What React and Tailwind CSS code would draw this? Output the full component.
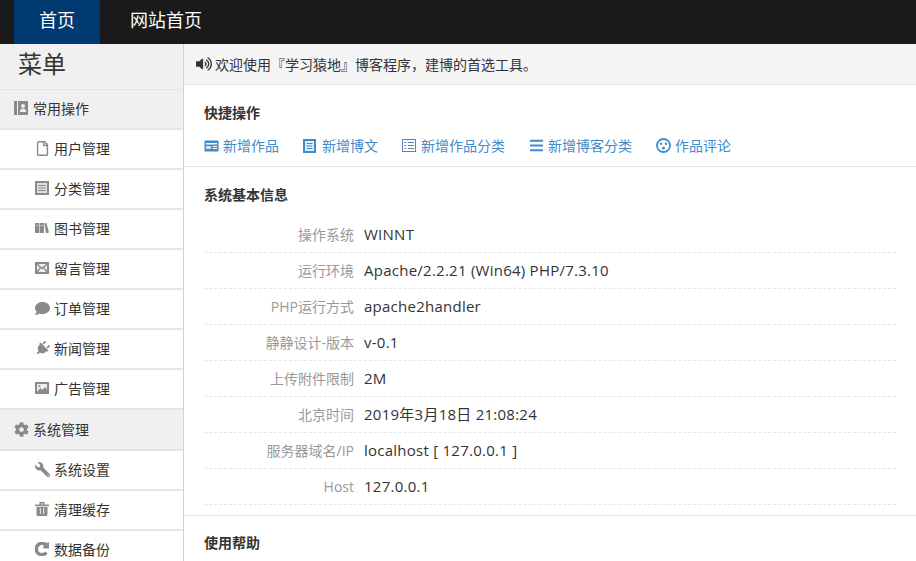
import React from "react";
import { FaVolumeUp, FaRegFile, FaComment, FaPlug, FaCog, FaWrench, FaRedoAlt, FaBars } from "react-icons/fa";

const Svg = ({ children, w = 14, h = 14, className = "" }) => (
  <svg width={w} height={h} viewBox={`0 0 ${w} ${h}`} className={className}>{children}</svg>
);

const AddressIcon = () => (
  <Svg>
    <path fill="currentColor" d="M0 0h3v14H0zM4 0h10v14H4z" />
    <circle cx="9" cy="5" r="2" fill="#f0f0f0" />
    <path fill="#f0f0f0" d="M6 11c0-3 1-3.5 3-3.5s3 .5 3 3.5z" />
  </Svg>
);
const ListIcon = () => (
  <Svg>
    <rect x="1" y="1" width="12" height="12" fill="#ddd" stroke="currentColor" strokeWidth="2" />
    <path stroke="currentColor" strokeWidth="1.2" d="M3.5 4.5h7M3.5 7h7M3.5 9.5h7" />
  </Svg>
);
const BooksIcon = () => (
  <Svg h={12}>
    <path fill="currentColor" d="M0 1h4.2v10H0zM4.8 1H9v10H4.8zM9.4 1.5l2-.7L14 10.5l-3 .7z" />
    <path fill="#ddd" d="M.8 3h2.6v.8H.8zM5.6 3h2.6v.8H5.6z" />
  </Svg>
);
const MailIcon = () => (
  <Svg h={12}>
    <rect x="1" y="1" width="12" height="10" fill="#eee" stroke="currentColor" strokeWidth="2" />
    <path stroke="currentColor" strokeWidth="1.4" fill="none" d="M2 2l5 4.5L12 2M2 10l3.6-4.6M12 10L8.4 5.4" />
  </Svg>
);
const PictureIcon = () => (
  <Svg h={12}>
    <rect x="1" y="1" width="12" height="10" fill="#eee" stroke="currentColor" strokeWidth="2" />
    <path fill="currentColor" d="M2 10l3.5-4 2 2 2.5-3 2 2.5V10z" />
    <circle cx="4.5" cy="4" r="1.1" fill="currentColor" />
  </Svg>
);
const TrashIcon = () => (
  <Svg>
    <path fill="currentColor" d="M0 2.5h14V4.2H0zM4.5 0h5v3H8V1.4H6V3H4.5zM1.5 5h11v7.5c0 .8-.7 1.5-1.5 1.5H3c-.8 0-1.5-.7-1.5-1.5z" />
    <path fill="#ddd" d="M4.8 6h1.2v6H4.8zM8 6h1.2v6H8z" />
  </Svg>
);
const NewsIcon = () => (
  <Svg w={15} h={12}>
    <rect x="0.5" y="0.5" width="14" height="11" fill="currentColor" />
    <path fill="#fff" d="M2 3h11v1.4H2zM8.5 6H13v1H8.5zM8.5 8H13v1H8.5z" />
    <path fill="#cfe2f3" d="M2 6h5v3H2z" />
  </Svg>
);
const DocIcon = () => (
  <Svg w={13} h={14}>
    <rect x="1" y="1" width="11" height="12" fill="#e4eef7" stroke="currentColor" strokeWidth="2" />
    <path stroke="currentColor" strokeWidth="1.2" d="M3.5 4.5h6M3.5 7h6M3.5 9.5h6" />
  </Svg>
);
const FormIcon = () => (
  <Svg w={14} h={13}>
    <rect x="0.5" y="0.5" width="13" height="12" fill="#fff" stroke="currentColor" strokeWidth="1" />
    <path stroke="currentColor" strokeWidth="1" d="M6 3.5h6M6 6.5h6M6 9.5h6" />
    <path stroke="#c77" strokeWidth="1" d="M2 3.5h2.5M2 6.5h2.5M2 9.5h2.5" />
  </Svg>
);
const FaceIcon = () => (
  <Svg w={15} h={15}>
    <circle cx="7.5" cy="7.5" r="6.5" fill="none" stroke="currentColor" strokeWidth="1.8" />
    <circle cx="5" cy="5.8" r="1.2" fill="currentColor" />
    <circle cx="10" cy="5.8" r="1.2" fill="currentColor" />
    <circle cx="7.5" cy="10" r="1.6" fill="currentColor" />
  </Svg>
);

const font = { fontFamily: '"Open Sans","Noto Sans CJK SC",sans-serif' };

function Item({ icon, label }) {
  return (
    <div className="h-10 border-b-2 border-[#e5e5e5] bg-white flex items-center pl-[35px] pb-[2px] text-[14px] text-[#333] shrink-0">
      <span className="w-[19px] flex items-center text-[#8a8a8a]">{icon}</span>
      <span>{label}</span>
    </div>
  );
}

function Group({ icon, label, h = "h-10 pb-[2px]" }) {
  return (
    <div className={`${h} border-b-2 border-[#e5e5e5] bg-[#f0f0f0] flex items-center pl-[14px] text-[14px] text-[#333] shrink-0`}>
      <span className="w-[19px] flex items-center text-[#8a8a8a]">{icon}</span>
      <span>{label}</span>
    </div>
  );
}

function Quick({ icon, label }) {
  return (
    <a className="flex items-center text-[14px] text-[#428bca]">
      <span className="w-[19px] flex items-center">{icon}</span>
      <span>{label}</span>
    </a>
  );
}

const rows = [
  ["操作系统", "WINNT"],
  ["运行环境", "Apache/2.2.21 (Win64) PHP/7.3.10"],
  ["PHP运行方式", "apache2handler"],
  ["静静设计-版本", "v-0.1"],
  ["上传附件限制", "2M"],
  ["北京时间", "2019年3月18日 21:08:24"],
  ["服务器域名/IP", "localhost [ 127.0.0.1 ]"],
  ["Host", "127.0.0.1"],
];

export default function App() {
  return (
    <div className="h-[561px] w-[916px] overflow-hidden bg-white flex flex-col" style={font}>
      <header className="h-11 bg-[#1a1a1a] flex items-stretch pl-[14px] shrink-0 text-[18px] text-white">
        <div className="w-[86px] bg-[#003a70] flex items-center justify-center pb-1">首页</div>
        <div className="flex items-center pl-[30px] pb-1">网站首页</div>
      </header>
      <div className="flex flex-1 min-h-0">
        <aside className="w-[184px] border-r border-[#d0d0d0] flex flex-col shrink-0 overflow-hidden">
          <div className="h-[46px] bg-[#f0f0f0] border-b border-[#e5e5e5] pl-[18px] text-[24px] leading-[40px] text-[#333] shrink-0">菜单</div>
          <Group icon={<AddressIcon />} label="常用操作" />
          <Item icon={<FaRegFile className="text-[15px]" />} label="用户管理" />
          <Item icon={<ListIcon />} label="分类管理" />
          <Item icon={<BooksIcon />} label="图书管理" />
          <Item icon={<MailIcon />} label="留言管理" />
          <Item icon={<FaComment className="text-[15px]" />} label="订单管理" />
          <Item icon={<FaPlug className="text-[15px] rotate-45" />} label="新闻管理" />
          <Item icon={<PictureIcon />} label="广告管理" />
          <Group icon={<FaCog className="text-[15px]" />} label="系统管理" h="h-[41px]" />
          <Item icon={<FaWrench className="text-[15px] -scale-x-100" />} label="系统设置" />
          <Item icon={<TrashIcon />} label="清理缓存" />
          <Item icon={<FaRedoAlt className="text-[14px]" stroke="currentColor" strokeWidth="50" />} label="数据备份" />
        </aside>
        <main className="flex-1 min-w-0 overflow-hidden">
          <div className="h-[41px] bg-[#f5f5f5] border-b border-[#e5e5e5] flex items-center pl-[12px] text-[14px] text-[#333]">
            <FaVolumeUp className="text-[16px] text-[#333] mr-[3px]" />
            <span>欢迎使用『学习猿地』博客程序，建博的首选工具。</span>
          </div>
          <section className="h-[82px] border-b border-[#e5e5e5] px-5 pt-[18px]">
            <h2 className="text-[14px] font-bold text-[#333] leading-5">快捷操作</h2>
            <div className="flex gap-6 mt-[12px]">
              <Quick icon={<NewsIcon />} label="新增作品" />
              <Quick icon={<DocIcon />} label="新增博文" />
              <Quick icon={<FormIcon />} label="新增作品分类" />
              <Quick icon={<FaBars className="text-[15px] w-[15px]" />} label="新增博客分类" />
              <Quick icon={<FaceIcon />} label="作品评论" />
            </div>
          </section>
          <section className="px-5 pt-[18px] border-b border-[#e5e5e5] h-[349px]">
            <h2 className="text-[14px] font-bold text-[#333] leading-5">系统基本信息</h2>
            <dl className="mt-[12px]">
              {rows.map(([k, v]) => (
                <div key={k} className="h-9 flex items-center border-b border-dashed border-[#e5e5e5]">
                  <dt className="w-[150px] text-right text-[14px] text-[#999]">{k}</dt>
                  <dd className="ml-[10px] text-[15px] tracking-[0.25px] text-[#333]">{v}</dd>
                </div>
              ))}
            </dl>
          </section>
          <section className="px-5 pt-[17px]">
            <h2 className="text-[14px] font-bold text-[#333] leading-5">使用帮助</h2>
          </section>
        </main>
      </div>
    </div>
  );
}
